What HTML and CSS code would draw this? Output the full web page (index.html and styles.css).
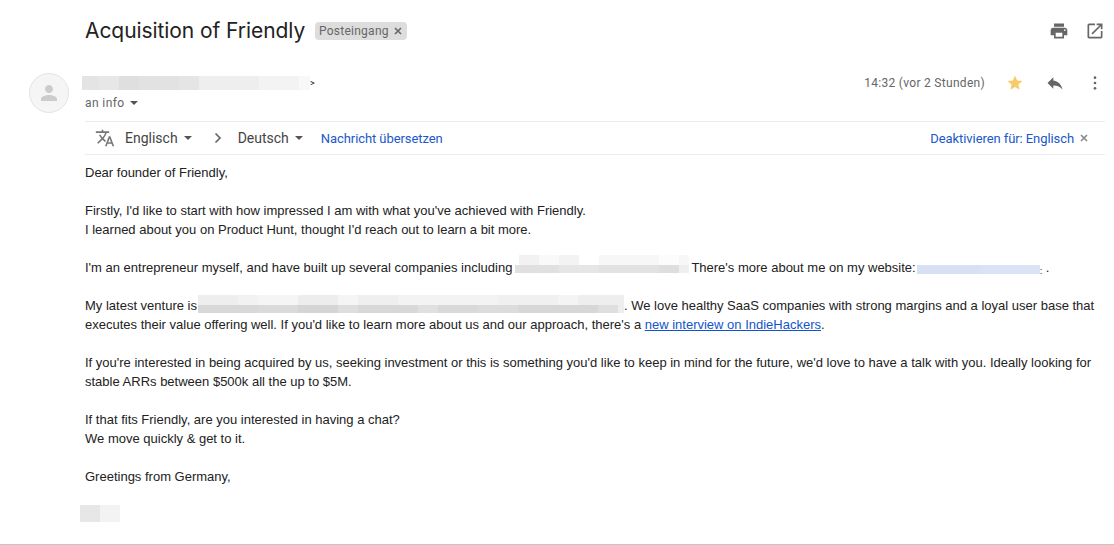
FILE: index.html
```
<!DOCTYPE html>
<html lang="de">
<head>
    <meta charset="UTF-8">
    <meta name="viewport" content="width=device-width, initial-scale=1.0">
    <title>Acquisition of Friendly</title>
    <link rel="stylesheet" href="styles.css">
</head>
<body>

<div class="mail">
    <header class="subject-row">
        <h1 class="subject">Acquisition of Friendly</h1>
        <span class="label">Posteingang
            <svg class="label-close" viewBox="0 0 8 8"><path d="M1 1l6 6M7 1L1 7"/></svg>
        </span>
        <div class="subject-actions">
            <svg class="icon" viewBox="0 0 24 24"><path d="M19 8H5c-1.66 0-3 1.34-3 3v6h4v4h12v-4h4v-6c0-1.66-1.34-3-3-3zm-3 11H8v-5h8v5zm3-7c-.55 0-1-.45-1-1s.45-1 1-1 1 .45 1 1-.45 1-1 1zm-1-9H6v4h12V3z"/></svg>
            <svg class="icon" viewBox="0 0 24 24"><path d="M19 19H5V5h7V3H5c-1.11 0-2 .9-2 2v14c0 1.1.89 2 2 2h14c1.1 0 2-.9 2-2v-7h-2v7zM14 3v2h3.59l-9.83 9.83 1.41 1.41L19 6.41V10h2V3h-7z"/></svg>
        </div>
    </header>

    <section class="sender-row">
        <div class="avatar">
            <svg viewBox="0 0 24 24"><path d="M12 12c2.21 0 4-1.79 4-4s-1.79-4-4-4-4 1.79-4 4 1.79 4 4 4zm0 2c-2.67 0-8 1.34-8 4v2h16v-2c0-2.66-5.33-4-8-4z"/></svg>
        </div>
        <div class="sender">
            <div class="sender-name"><span class="hidden-name"></span><span class="bracket">&gt;</span></div>
            <div class="recipient">an info <i class="caret"></i></div>
        </div>
        <div class="sender-actions">
            <span class="time">14:32 (vor 2 Stunden)</span>
            <svg class="icon star" viewBox="0 0 24 24"><path d="M12 17.27L18.18 21l-1.64-7.03L22 9.24l-7.19-.61L12 2 9.19 8.63 2 9.24l5.46 4.73L5.82 21z"/></svg>
            <svg class="icon" viewBox="0 0 24 24"><path d="M10 9V5l-7 7 7 7v-4.1c5 0 8.5 1.6 11 5.1-1-5-4-10-11-11z"/></svg>
            <svg class="icon dots" viewBox="0 0 24 24"><circle cx="12" cy="4" r="2"/><circle cx="12" cy="12" r="2"/><circle cx="12" cy="20" r="2"/></svg>
        </div>
    </section>

    <nav class="translate-bar">
        <svg class="translate-icon" viewBox="0 0 24 24"><path d="M12.87 15.07l-2.54-2.51.03-.03c1.74-1.94 2.98-4.17 3.71-6.53H17V4h-7V2H8v2H1v1.99h11.17C11.5 7.92 10.44 9.75 9 11.35 8.07 10.32 7.3 9.19 6.69 8h-2c.73 1.63 1.73 3.17 2.98 4.56l-5.09 5.02L4 19l5-5 3.11 3.11.76-2.04zM18.5 10h-2L12 22h2l1.12-3h4.75L21 22h2l-4.5-12zm-2.62 7l1.62-4.33L19.12 17h-3.24z"/></svg>
        <span class="lang">Englisch</span><i class="caret"></i>
        <svg class="chevron" viewBox="0 0 8 12"><path d="M1.5 1.5L6 6l-4.5 4.5"/></svg>
        <span class="lang">Deutsch</span><i class="caret"></i>
        <a class="translate-link">Nachricht übersetzen</a>
        <a class="disable-link">Deaktivieren für: Englisch</a>
        <svg class="bar-close" viewBox="0 0 8 8"><path d="M1 1l6 6M7 1L1 7"/></svg>
    </nav>

    <article class="message">
        <p>Dear founder of Friendly,</p>
        <p>Firstly, I'd like to start with how impressed I am with what you've achieved with Friendly.<br>
        I learned about you on Product Hunt, thought I'd reach out to learn a bit more.</p>
        <p>I'm an entrepreneur myself, and have built up several companies including<span class="hidden-text company"></span>There's more about me on my website:<span class="hidden-text website"></span><span class="speck">:</span> .</p>
        <p>My latest venture is<span class="hidden-text venture"></span>. We love healthy SaaS companies with strong margins and a loyal user base that<br>
        executes their value offering well. If you'd like to learn more about us and our approach, there's a <a class="article-link">new interview on IndieHackers</a>.</p>
        <p>If you're interested in being acquired by us, seeking investment or this is something you'd like to keep in mind for the future, we'd love to have a talk with you. Ideally looking for<br>
        stable ARRs between $500k all the up to $5M.</p>
        <p>If that fits Friendly, are you interested in having a chat?<br>
        We move quickly &amp; get to it.</p>
        <p>Greetings from Germany,</p>
        <div class="signature"></div>
    </article>
</div>

</body>
</html>
```
FILE: styles.css
```
* {
    box-sizing: border-box;
}
body {
    margin: 0;
    background: #fff;
    color: #222;
    font-family: Roboto, Arial, sans-serif;
}
svg {
    display: block;
    flex: none;
}
.mail {
    height: 545px;
    overflow: hidden;
    white-space: nowrap;
    border-bottom: 1px solid #c4c4c4;
}
.icon {
    width: 20px;
    height: 20px;
    fill: #666;
}
.caret {
    display: inline-block;
    border: 4px solid transparent;
    border-top-color: #555;
    border-bottom: 0;
}

/* Subject */
.subject-row {
    display: flex;
    align-items: center;
    height: 62px;
    padding: 0 9px 0 85px;
}
.subject {
    width: 220px;
    margin: 0;
    font-family: Inter, sans-serif;
    font-size: 21px;
    font-weight: 400;
    letter-spacing: -0.07px;
    line-height: 28px;
}
.label {
    display: flex;
    align-items: center;
    justify-content: space-between;
    width: 92px;
    height: 18px;
    margin-left: 10px;
    padding: 0 5px 0 4px;
    border-radius: 4px;
    background: #ddd;
    color: #666;
    font-size: 12px;
    letter-spacing: 0.25px;
}
.label-close,
.bar-close {
    width: 8px;
    height: 8px;
    fill: none;
    stroke: #666;
    stroke-width: 1.6;
}
.subject-actions {
    display: flex;
    gap: 16px;
    margin-left: auto;
}

/* Sender */
.sender-row {
    display: flex;
    height: 59px;
    padding: 11px 9px 0 29px;
}
.avatar {
    display: flex;
    align-items: center;
    justify-content: center;
    width: 40px;
    height: 40px;
    border: 1px solid #e4e4e4;
    border-radius: 50%;
    background: #f5f5f5;
}
.avatar svg {
    width: 24px;
    height: 24px;
    fill: #ccc;
}
.sender {
    margin-left: 13px;
}
.sender-name {
    display: flex;
    height: 20px;
    padding-top: 3px;
}
.hidden-name {
    width: 228px;
    height: 14px;
    background: linear-gradient(90deg, #e4e4e4 17px, #e7e7e7 17px 37px, #dfdfdf 37px 57px, #e2e2e2 57px 97px, #e5e5e5 97px 117px, #eee 117px 177px, #f3f3f3 177px 217px, #f8f8f8 217px);
}
.bracket {
    font-size: 9px;
    line-height: 14px;
}
.recipient {
    padding-left: 3px;
    color: #666;
    font-size: 12px;
    letter-spacing: 0.4px;
    line-height: 20px;
}
.recipient .caret {
    margin-left: 2px;
    vertical-align: 2px;
}
.sender-actions {
    display: flex;
    align-items: center;
    gap: 20px;
    height: 20px;
    margin-left: auto;
}
.time {
    color: #666;
    font-size: 12px;
    letter-spacing: 0.3px;
}
.star {
    padding: 1px;
    fill: #f7cb69;
}
.dots {
    padding: 2px;
}

/* Translation bar */
.translate-bar {
    display: flex;
    align-items: center;
    height: 34px;
    margin: 0 9px 0 85px;
    padding: 0 17px 0 10px;
    border-top: 1px solid #ececec;
    border-bottom: 1px solid #ececec;
    font-size: 14px;
}
.translate-icon {
    width: 20px;
    height: 20px;
    margin-right: 10px;
    fill: #777;
}
.lang {
    color: #444;
}
.lang + .caret {
    margin-left: 6px;
}
.chevron {
    width: 8px;
    height: 12px;
    margin: 0 16px 0 22px;
    fill: none;
    stroke: #666;
    stroke-width: 1.7;
}
.translate-link,
.disable-link {
    color: #2058c8;
    font-size: 13px;
    letter-spacing: -0.08px;
}
.translate-link {
    margin-left: 18px;
}
.disable-link {
    margin-left: auto;
}
.bar-close {
    margin-left: 6px;
    stroke: #888;
}

/* Message */
.message {
    padding: 8px 0 0 85px;
    font-family: Arial, "Liberation Sans", sans-serif;
    font-size: 13px;
    line-height: 19px;
}
.message p {
    margin: 0 0 19px;
}
.hidden-text {
    display: inline-block;
    height: 18px;
    vertical-align: top;
}
.company {
    width: 174px;
    margin: -3px 2px 0 3px;
    background:
        linear-gradient(90deg, #e0e0e0 44px, #e6e6e6 44px 84px, #e2e2e2 84px 144px, #dedede 144px 164px, #efefef 164px) 0 10px no-repeat,
        linear-gradient(90deg, #fff 4px, #f2f2f2 4px 24px, #f9f9f9 24px 44px, #f3f3f3 44px 64px, #fff 64px 84px, #f7f7f7 84px 144px, #fcfcfc 144px 164px, #f7f7f7 164px);
}
.website {
    width: 123px;
    height: 9px;
    margin: 7px 0 0 1px;
    background: linear-gradient(90deg, #d8e1f3 63px, #dae3f5 63px);
}
.speck {
    font-size: 9px;
    line-height: 0;
    vertical-align: -2px;
}
.venture {
    width: 426px;
    margin: -1px 0 0 1px;
    background:
        linear-gradient(90deg, #d8d8d8 60px, #dadada 60px 100px, #d5d5d5 100px 140px, #dedede 140px 160px, #d8d8d8 160px 220px, #e0e0e0 220px 240px, #d9d9d9 240px 280px, #dcdcdc 280px 320px, #d7d7d7 320px 400px, #dfdfdf 400px 420px, #eee 420px) 0 10px no-repeat,
        linear-gradient(90deg, #eee 40px, #f2f2f2 40px 60px, #f5f5f5 60px 100px, #ededed 100px 140px, #f5f5f5 140px 160px, #efefef 160px 200px, #f3f3f3 200px 300px, #f0f0f0 300px 360px, #f4f4f4 360px 380px, #eee 380px);
}
.article-link {
    color: #1155cc;
    text-decoration: underline;
}
.signature {
    width: 40px;
    height: 17px;
    margin-left: -5px;
    background: linear-gradient(90deg, #e7e7e7 20px, #f3f3f3 20px);
}
```
